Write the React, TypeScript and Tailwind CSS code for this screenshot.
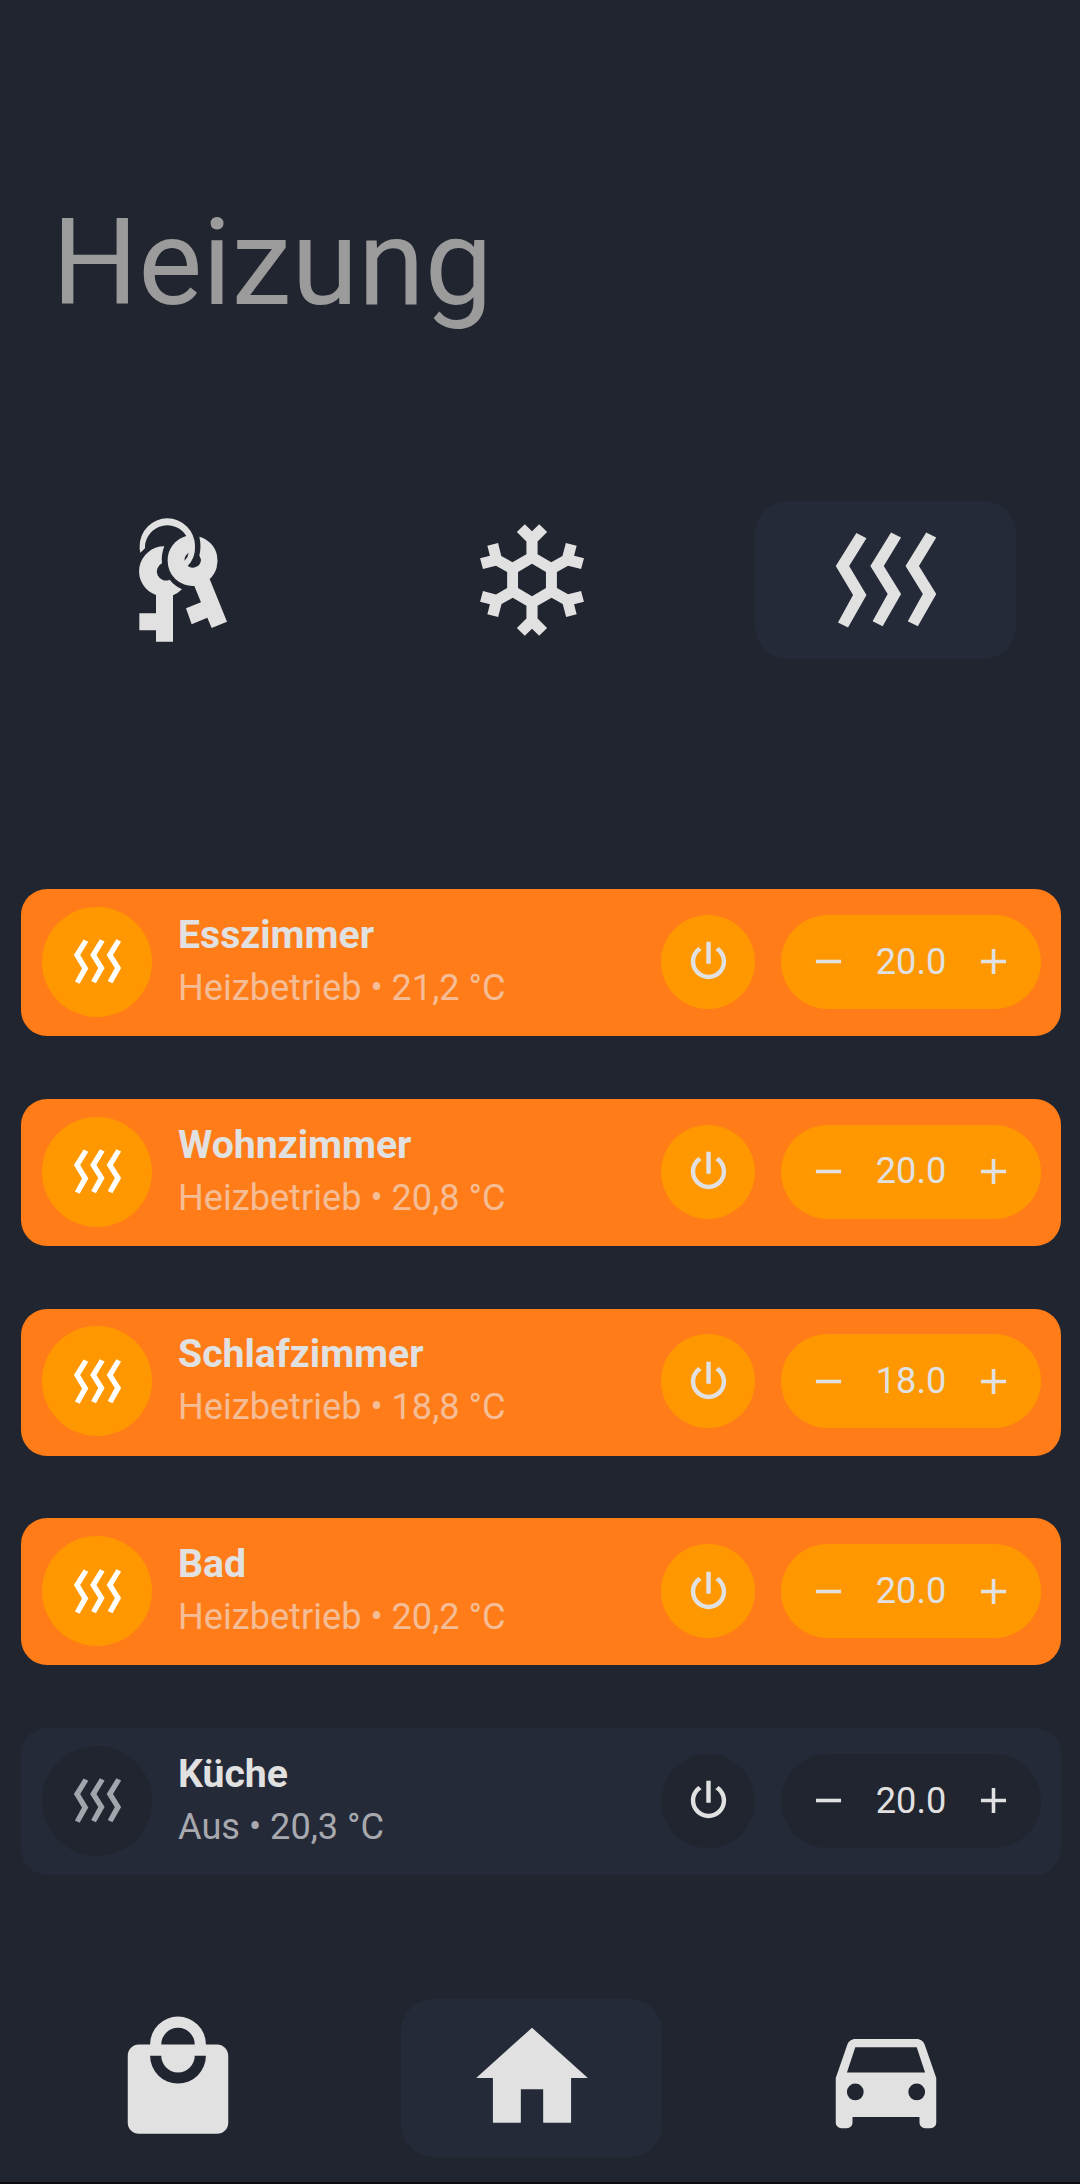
const ICONS = {
  heat: 'M8.5 4.5L5.4 9.5L8.5 14.7L5.2 20.5L3.4 19.6L6.1 14.7L3 9.5L6.7 3.6L8.5 4.5M14.7 4.4L11.6 9.5L14.7 14.5L11.4 20.3L9.6 19.4L12.3 14.5L9.2 9.5L12.9 3.5L14.7 4.4M21 4.4L17.9 9.5L21 14.5L17.7 20.3L15.9 19.4L18.6 14.5L15.5 9.5L19.2 3.5L21 4.4',
  snow: 'M20.79,13.95L18.46,14.57L16.46,13.44V10.56L18.46,9.43L20.79,10.05L21.31,8.12L19.54,7.65L20,5.88L18.07,5.36L17.45,7.69L15.45,8.82L13,7.38V5.12L14.71,3.41L13.29,2L12,3.29L10.71,2L9.29,3.41L11,5.12V7.38L8.5,8.82L6.5,7.69L5.92,5.36L4,5.88L4.47,7.65L2.7,8.12L3.22,10.05L5.55,9.43L7.55,10.56V13.45L5.55,14.58L3.22,13.96L2.7,15.89L4.47,16.36L4,18.12L5.93,18.64L6.55,16.31L8.55,15.18L11,16.62V18.88L9.29,20.59L10.71,22L12,20.71L13.29,22L14.7,20.59L13,18.88V16.62L15.5,15.17L17.5,16.3L18.12,18.63L20,18.12L19.53,16.35L21.3,15.88L20.79,13.95M9.5,10.56L12,9.11L14.5,10.56V13.44L12,14.89L9.5,13.44V10.56Z',
  power: 'M16.56,5.44L15.11,6.89C16.84,7.94 18,9.83 18,12A6,6 0 0,1 12,18A6,6 0 0,1 6,12C6,9.83 7.16,7.94 8.88,6.88L7.44,5.44C5.36,6.88 4,9.28 4,12A8,8 0 0,0 12,20A8,8 0 0,0 20,12C20,9.28 18.64,6.88 16.56,5.44M13,3H11V13H13',
  minus: 'M19,13H5V11H19V13Z',
  plus: 'M19,13H13V19H11V13H5V11H11V5H13V11H19V13Z',
  bag: 'M12,13A5,5 0 0,1 7,8H9A3,3 0 0,0 12,11A3,3 0 0,0 15,8H17A5,5 0 0,1 12,13M12,3A3,3 0 0,1 15,6H9A3,3 0 0,1 12,3M19,6H17A5,5 0 0,0 12,1A5,5 0 0,0 7,6H5C3.89,6 3,6.89 3,8V20A2,2 0 0,0 5,22H19A2,2 0 0,0 21,20V8C21,6.89 20.1,6 19,6Z',
  home: 'M10,20V14H14V20H19V12H22L12,3L2,12H5V20H10Z',
  car: 'M5,11L6.5,6.5H17.5L19,11M17.5,16A1.5,1.5 0 0,1 16,14.5A1.5,1.5 0 0,1 17.5,13A1.5,1.5 0 0,1 19,14.5A1.5,1.5 0 0,1 17.5,16M6.5,16A1.5,1.5 0 0,1 5,14.5A1.5,1.5 0 0,1 6.5,13A1.5,1.5 0 0,1 8,14.5A1.5,1.5 0 0,1 6.5,16M18.92,6C18.72,5.42 18.16,5 17.5,5H6.5C5.84,5 5.28,5.42 5.08,6L3,12V20A1,1 0 0,0 4,21H5A1,1 0 0,0 6,20V19H18V20A1,1 0 0,0 19,21H20A1,1 0 0,0 21,20V12L18.92,6Z',
  keys: 'M162 139Q152 164 155 190A25 25 0 1 0 178 239Q192 257 215 268Q204 279 188 286V425H137V391H87V340H137V285A75 75 0 0 1 162 139Z M267 110A75 75 0 0 1 298 237L350 365L304 384L291 353L244 373L227 325L272 307L252 258A75 75 0 0 1 172 183A75 75 0 0 1 228 108A67 67 0 0 0 104 138V145L90 158Q87 148 88 138A83 83 0 0 1 254 138Q256 173 232 198A25 25 0 0 0 272 179L267 166Q274 140 267 110Z M222 182L231 172L235 158Q222 167 222 182Z',
}

type IconName = keyof typeof ICONS

function Icon({ name, className }: { name: IconName; className: string }) {
  return (
    <svg
      viewBox={name === 'keys' ? '2 39 402 402' : '0 0 24 24'}
      className={className}
      fill="currentColor"
      fillRule={name === 'keys' ? 'evenodd' : 'nonzero'}
      aria-hidden="true"
    >
      <path d={ICONS[name]} />
    </svg>
  )
}

function TabRow({ tabs }: { tabs: { icon: IconName; active?: boolean }[] }) {
  return (
    <nav className="ml-[1.5px] grid w-[1061px] grid-cols-3 justify-items-center">
      {tabs.map((t) => (
        <button
          key={t.icon}
          className={
            'flex h-[158px] w-[261px] items-center justify-center rounded-[32px] ' +
            (t.active ? 'bg-[#252a38]' : '')
          }
        >
          <Icon name={t.icon} className="size-[134px]" />
        </button>
      ))}
    </nav>
  )
}

const rooms = [
  { name: 'Esszimmer', state: 'Heizbetrieb • 21,2 °C', target: '20.0', on: true },
  { name: 'Wohnzimmer', state: 'Heizbetrieb • 20,8 °C', target: '20.0', on: true },
  { name: 'Schlafzimmer', state: 'Heizbetrieb • 18,8 °C', target: '18.0', on: true },
  { name: 'Bad', state: 'Heizbetrieb • 20,2 °C', target: '20.0', on: true },
  { name: 'Küche', state: 'Aus • 20,3 °C', target: '20.0', on: false },
]

function RoomCard({ room }: { room: (typeof rooms)[number] }) {
  const chip = room.on ? 'bg-[#ff9800]' : 'bg-[#212530]'
  return (
    <section
      className={
        'flex h-[147px] items-center rounded-[26px] pr-[20.5px] pb-[1.5px] pl-[21px] ' +
        (room.on ? 'bg-[#ff7c19]' : 'bg-[#252a38]')
      }
    >
      <div className={'flex size-[110px] shrink-0 items-center justify-center rounded-full ' + chip}>
        <Icon name="heat" className={'size-[63px] ' + (room.on ? 'text-white' : 'text-[#a2a5ac]')} />
      </div>
      <div className="ml-[26px] grow pb-px whitespace-nowrap">
        <div className="text-[39.2px] leading-[53px] font-bold">{room.name}</div>
        <div
          className={
            'text-[36.15px] leading-[52px] ' + (room.on ? 'text-[#f5bd96]' : 'text-[#a7a9af]')
          }
        >
          {room.state}
        </div>
      </div>
      <button className={'flex size-[94px] items-center justify-center rounded-full ' + chip}>
        <Icon name="power" className="size-[53px]" />
      </button>
      <div
        className={
          'ml-[25.5px] flex h-[94px] w-[260px] items-center justify-between rounded-full pr-[25.5px] pl-[26.5px] ' +
          chip
        }
      >
        <Icon name="minus" className="size-[43px]" />
        <span className="text-[36.15px]">{room.target}</span>
        <Icon name="plus" className="size-[43px]" />
      </div>
    </section>
  )
}

export default function App() {
  return (
    <div className="flex h-[2184px] w-[1080px] flex-col overflow-hidden border-b-2 border-[#0c0b0f] bg-[#212530] font-[Roboto,sans-serif] text-[#e1e1e1]">
      <h1 className="mt-[192px] ml-[52px] text-[120.75px] leading-[142px] text-[#9b9b9b]">Heizung</h1>
      <div className="mt-[166.5px]">
        <TabRow tabs={[{ icon: 'keys' }, { icon: 'snow' }, { icon: 'heat', active: true }]} />
      </div>
      <main className="mt-[230.5px] flex flex-col gap-[62.75px] pr-[19px] pl-[21px]">
        {rooms.map((r) => (
          <RoomCard key={r.name} room={r} />
        ))}
      </main>
      <div className="mt-[124px]">
        <TabRow tabs={[{ icon: 'bag' }, { icon: 'home', active: true }, { icon: 'car' }]} />
      </div>
    </div>
  )
}
